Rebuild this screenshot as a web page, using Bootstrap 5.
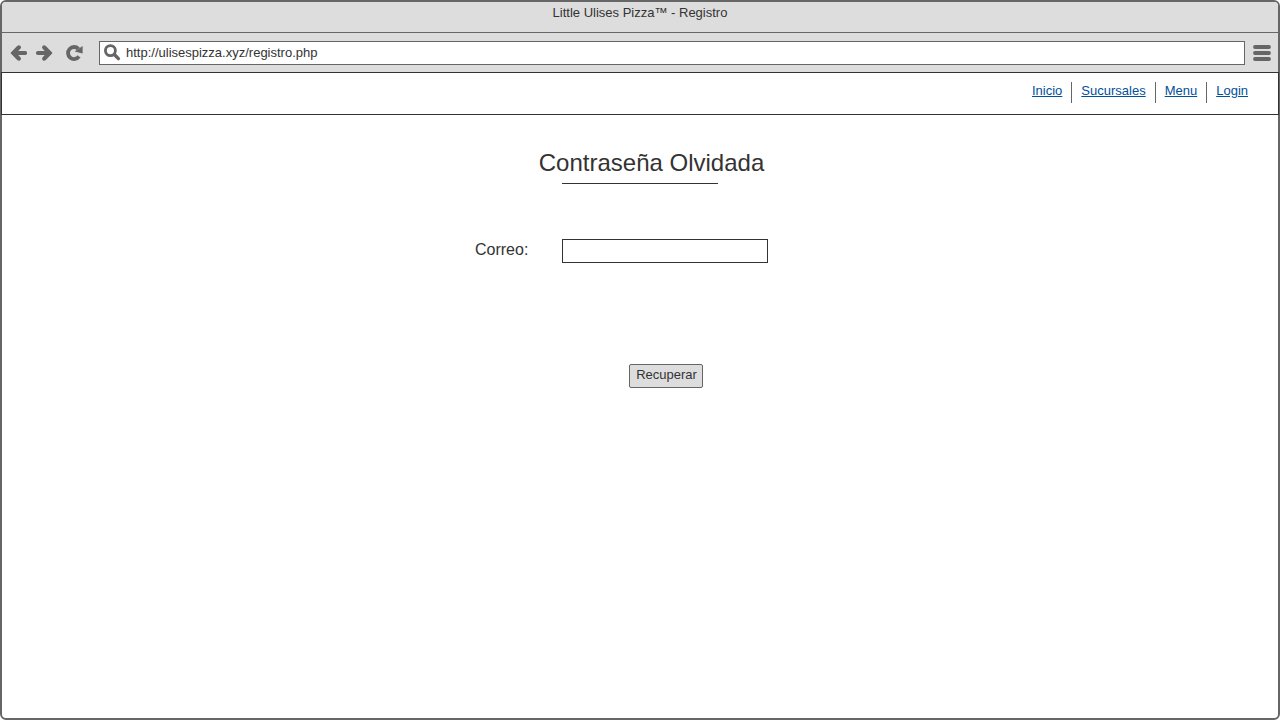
<!DOCTYPE html>
<html lang="es">
<head>
<meta charset="utf-8">
<meta name="viewport" content="width=device-width, initial-scale=1">
<title>Little Ulises Pizza™ - Registro</title>
<link href="https://cdn.jsdelivr.net/npm/bootstrap@5.3.0/dist/css/bootstrap.min.css" rel="stylesheet">
<style>
  :root { --frame: #666; --chrome: #ddd; --ink: #333; }
  body { font-family: "Liberation Sans", Arial, sans-serif; font-size: 13px; line-height: 16px; color: var(--ink); }
  .browser { border: 2px solid var(--frame); border-radius: 6px; }
  .browser-title { background: var(--chrome); border-bottom: 1px solid var(--frame); border-radius: 4px 4px 0 0; padding: 3px 0 11px; }
  .browser-bar { background: var(--chrome); padding: 8px 7px 7px; }
  .tool { width: 18px; height: 18px; color: var(--frame); }
  .tool svg { display: block; }
  .reload { margin: 0 16px 0 12px; }
  .address { border: 1px solid var(--frame); height: 24px; padding: 0 4px; }
  .address input { font-size: 13px; line-height: 16px; color: var(--ink); outline: 0; }
  .site-nav { border: 1px solid var(--ink); margin: 0 -1px; padding: 9px 21px 11px; }
  .site-nav .nav-item { height: 21px; padding: 1px 9px 0; }
  .site-nav .nav-item + .nav-item { border-left: 1px solid var(--frame); }
  .site-nav a { color: #00509a; }
  .recover { width: 330px; max-width: 100%; padding-top: 32px; }
  .recover h1 { font-size: 24px; line-height: 32px; font-weight: 400; padding-left: 23px; }
  .rule { width: 156px; height: 1px; background: var(--ink); opacity: 1; border: 0; margin: 4px auto 55px; }
  .recover label { width: 87px; font-size: 16px; line-height: 22px; }
  .field { width: 206px; }
  .field .form-control { height: 24px; border: 1px solid var(--ink); border-radius: 0; padding: 0 6px; font-size: 13px; }
  .send { margin: 101px 0 0 88px; }
  .send .btn { --bs-btn-bg: var(--chrome); --bs-btn-border-color: var(--frame); --bs-btn-color: var(--ink); --bs-btn-hover-bg: #ccc; font-size: 13px; line-height: 16px; border-radius: 2px; padding: 2px 5px 4px 6px; }
</style>
</head>
<body>
<div class="browser min-vh-100 d-flex flex-column bg-white">
  <div class="browser-title text-center">Little Ulises Pizza™ - Registro</div>
  <div class="browser-bar d-flex align-items-center">
    <button type="button" class="tool btn p-0 border-0" aria-label="Atrás">
      <svg width="18" height="18" viewBox="0 0 18 18" fill="none" stroke="currentColor" stroke-width="4.2" stroke-linecap="round"><path d="M6 9H16M9.8 3.4 4.5 9 9.8 14.6"/><path d="M1.6 9 8 2.6v12.8Z" fill="currentColor" stroke="none"/></svg>
    </button>
    <button type="button" class="tool btn p-0 border-0 ms-2" aria-label="Adelante">
      <svg width="18" height="18" viewBox="0 0 18 18" fill="none" stroke="currentColor" stroke-width="4.2" stroke-linecap="round"><path d="M13 9H3M9.2 3.4 14.5 9 9.2 14.6"/><path d="M17.4 9 11 2.6v12.8Z" fill="currentColor" stroke="none"/></svg>
    </button>
    <button type="button" class="tool reload btn p-0 border-0" aria-label="Recargar">
      <svg width="18" height="18" viewBox="0 0 18 18"><path d="M14 12.4A6 6 0 1 1 13.4 4.9" fill="none" stroke="currentColor" stroke-width="3.8"/><path d="M17.6 2V9.6L9.6 7.6Z" fill="currentColor"/></svg>
    </button>
    <div class="address bg-white d-flex align-items-center flex-grow-1">
      <svg width="18" height="18" viewBox="0 0 18 18" fill="none" stroke="#666"><circle cx="6.4" cy="6.6" r="5" stroke-width="2.8"/><path d="M10.6 10.8 14.4 14.6" stroke-width="3.4" stroke-linecap="round"/></svg>
      <input class="border-0 p-0 ms-1 flex-grow-1 bg-transparent" type="text" value="http://ulisespizza.xyz/registro.php" aria-label="Dirección">
    </div>
    <button type="button" class="tool btn p-0 border-0 ms-2" aria-label="Menú del navegador">
      <svg width="18" height="18" viewBox="0 0 18 18" stroke="currentColor" stroke-width="3.8" stroke-linecap="round"><path d="M2 3H16M2 9H16M2 15H16"/></svg>
    </button>
  </div>
  <nav class="site-nav" aria-label="Principal">
    <ul class="nav justify-content-end">
      <li class="nav-item"><a href="#">Inicio</a></li>
      <li class="nav-item"><a href="#">Sucursales</a></li>
      <li class="nav-item"><a href="#">Menu</a></li>
      <li class="nav-item"><a href="#">Login</a></li>
    </ul>
  </nav>
  <main class="flex-grow-1">
    <form class="recover mx-auto">
      <h1 class="text-center mb-0">Contraseña Olvidada</h1>
      <hr class="rule">
      <div class="d-flex">
        <label for="correo">Correo:</label>
        <div class="field"><input class="form-control" type="email" id="correo"></div>
      </div>
      <div class="field send text-center"><button type="submit" class="btn">Recuperar</button></div>
    </form>
  </main>
</div>
<script src="https://cdn.jsdelivr.net/npm/bootstrap@5.3.0/dist/js/bootstrap.bundle.min.js"></script>
</body>
</html>
